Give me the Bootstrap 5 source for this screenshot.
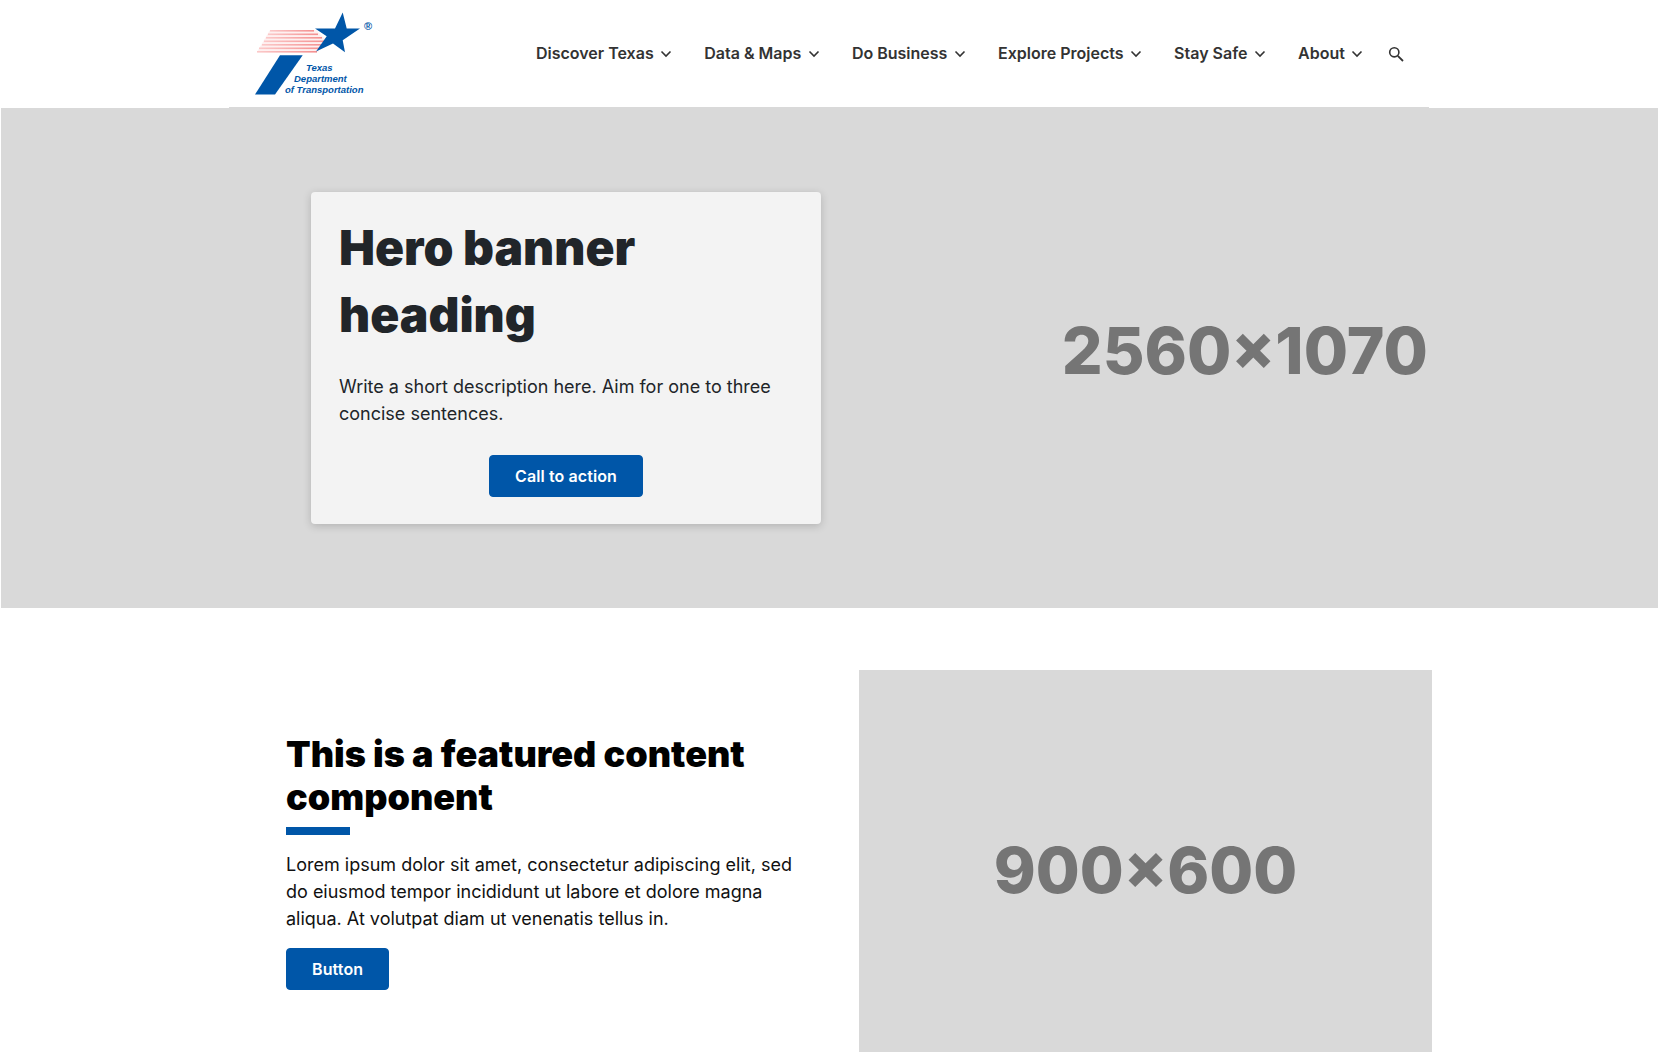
<!DOCTYPE html>
<html lang="en">
<head>
  <meta charset="UTF-8" />
  <meta name="viewport" content="width=device-width, initial-scale=1.0"/>
  <title>TxDOT components</title>
  <link href="https://cdn.jsdelivr.net/npm/bootstrap@5.3.0/dist/css/bootstrap.min.css" rel="stylesheet"/>
  <style>
    body { font-family: Inter, "Liberation Sans", sans-serif; color: #212529; }
    .site-head { width: 1200px; margin-left: 229px; height: 108px; padding-left: 25px; padding-right: 25px; border-bottom: 1px solid #d9d9d9; }
    .site-logo { width: 120px; height: 90px; margin-top: -1px; }
    .site-logo text { font-family: "Liberation Sans", sans-serif; font-style: italic; font-weight: 700; font-size: 9.5px; fill: #0056a8; }
    .site-logo text.logo-reg { font-style: normal; font-weight: 700; font-size: 11px; }
    .top-link { font-size: 16px; font-weight: 600; color: #333; text-decoration: none; white-space: nowrap; }
    .top-link svg { margin-left: 6.5px; }
    .top-nav { gap: 32.1px; margin-top: -2px; }
    .top-search { margin-left: -14px; }
    .hero-band { background: #d9d9d9; height: 500px; margin-left: 1px; padding-left: 310px; padding-right: 230px; }
    .hero-box { width: 510px; height: 332px; background: #f3f3f3; border-radius: 4px; padding: 22px 28px; box-shadow: 0 2px 8px rgba(0,0,0,.18); margin-top: 84px; }
    .hero-title { font-size: 48px; font-weight: 900; line-height: 67px; margin-bottom: 25px; color: #212529; }
    .hero-text { font-size: 18px; line-height: 27px; margin-bottom: 28px; }
    .brand-btn { background: #0056a8; color: #fff; font-size: 16px; font-weight: 600; letter-spacing: .1px; border-radius: 4px; border: 1px solid #0056a8; padding: 9px 25px; line-height: 22px; }
    .brand-btn:hover { background: #0056a8; color: #fff; }
    .ph-label { font-weight: 800; color: #757575; line-height: 1; }
    .hero-band .ph-label { font-size: 64.2px; margin-bottom: 13px; }
    .feature-img .ph-label { font-size: 63.6px; margin-top: 16px; }
    .feature-wrap { margin-left: 286px; width: 1147px; padding-top: 62px; gap: 63px; }
    .feature-copy { width: 510px; padding-top: 63px; }
    .feature-title { font-size: 36px; font-weight: 900; line-height: 43px; color: #000; margin-bottom: 8px; width: 530px; }
    .title-rule { width: 64px; height: 8px; background: #0056a8; margin-bottom: 16px; }
    .feature-text { font-size: 18px; line-height: 27px; color: #111; margin-bottom: 16px; }
    .feature-img { width: 573px; height: 383px; background: #d9d9d9; }
  </style>
</head>
<body>
  <header class="site-head d-flex align-items-center justify-content-between">
    <a href="#" class="d-block">
      <svg class="site-logo d-block" viewBox="0 0 120 90" role="img" aria-label="Texas Department of Transportation">
        <defs>
          <linearGradient id="stripeFade" x1="0" x2="1" y1="0" y2="0">
            <stop offset="0" stop-color="#fbc9c9"/>
            <stop offset="1" stop-color="#f48f8f"/>
          </linearGradient>
        </defs>
        <polygon fill="#fef0f0" points="16,22 62,22 72,32 64,44 3,44"/>
        <g fill="url(#stripeFade)">
          <rect x="16" y="22" width="44" height="1.6"/>
          <rect x="14" y="25.5" width="50" height="1.6"/>
          <rect x="12" y="29" width="56" height="1.6"/>
          <rect x="10" y="32.5" width="61" height="1.6"/>
          <rect x="8" y="36" width="61" height="1.6"/>
          <rect x="5" y="39.5" width="61" height="1.6"/>
          <rect x="3" y="43" width="60" height="1.6"/>
        </g>
        <polygon fill="#0056a8" points="88.7,4.5 92.7,20.5 106,20.5 88.7,32.2 91,44.2 79,35.5 62,43.5 72.7,28.2 61,20.5 81,20.5"/>
        <polygon fill="#0056a8" points="26,47.2 48.7,47.2 21,86.5 1,86.5"/>
        <text x="52" y="63.2">Texas</text>
        <text x="40" y="73.8">Department</text>
        <text x="31" y="84.8">of Transportation</text>
        <text class="logo-reg" x="110" y="21.5">®</text>
      </svg>
    </a>
    <nav class="top-nav d-flex align-items-center">
      <a href="#" class="top-link">Discover Texas<svg width="12" height="8" viewBox="0 0 12 8"><path d="M1.5 1.5 6 6l4.5-4.5" fill="none" stroke="#333" stroke-width="1.6"/></svg></a>
      <a href="#" class="top-link">Data &amp; Maps<svg width="12" height="8" viewBox="0 0 12 8"><path d="M1.5 1.5 6 6l4.5-4.5" fill="none" stroke="#333" stroke-width="1.6"/></svg></a>
      <a href="#" class="top-link">Do Business<svg width="12" height="8" viewBox="0 0 12 8"><path d="M1.5 1.5 6 6l4.5-4.5" fill="none" stroke="#333" stroke-width="1.6"/></svg></a>
      <a href="#" class="top-link">Explore Projects<svg width="12" height="8" viewBox="0 0 12 8"><path d="M1.5 1.5 6 6l4.5-4.5" fill="none" stroke="#333" stroke-width="1.6"/></svg></a>
      <a href="#" class="top-link">Stay Safe<svg width="12" height="8" viewBox="0 0 12 8"><path d="M1.5 1.5 6 6l4.5-4.5" fill="none" stroke="#333" stroke-width="1.6"/></svg></a>
      <a href="#" class="top-link">About<svg width="12" height="8" viewBox="0 0 12 8"><path d="M1.5 1.5 6 6l4.5-4.5" fill="none" stroke="#333" stroke-width="1.6"/></svg></a>
      <a href="#" class="top-link top-search" aria-label="Search"><svg width="16" height="16" viewBox="0 0 16 16"><circle cx="6.3" cy="6.3" r="4.6" fill="none" stroke="#333" stroke-width="1.6"/><path d="M9.8 9.8 15 15" stroke="#333" stroke-width="1.8"/></svg></a>
    </nav>
  </header>

  <section class="hero-band d-flex justify-content-between">
    <div class="hero-box">
      <h1 class="hero-title">Hero banner heading</h1>
      <p class="hero-text">Write a short description here. Aim for one to three concise sentences.</p>
      <div class="text-center"><a href="#" class="btn brand-btn">Call to action</a></div>
    </div>
    <div class="ph-label align-self-center">2560×1070</div>
  </section>

  <section class="feature-wrap d-flex">
    <div class="feature-copy">
      <h2 class="feature-title">This is a featured content component</h2>
      <div class="title-rule"></div>
      <p class="feature-text">Lorem ipsum dolor sit amet, consectetur adipiscing elit, sed do eiusmod tempor incididunt ut labore et dolore magna aliqua. At volutpat diam ut venenatis tellus in.</p>
      <a href="#" class="btn brand-btn">Button</a>
    </div>
    <div class="feature-img d-flex align-items-center justify-content-center flex-shrink-0">
      <div class="ph-label">900×600</div>
    </div>
  </section>
</body>
</html>
